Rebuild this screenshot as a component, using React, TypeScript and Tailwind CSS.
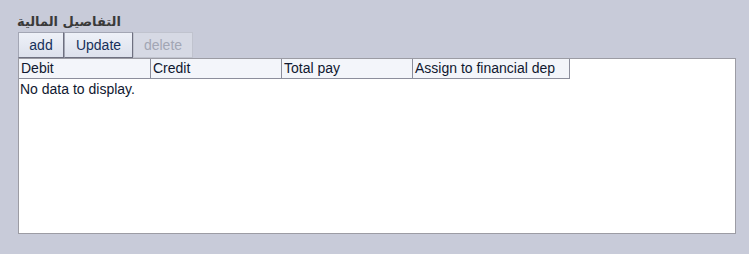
export default function App() {
  const columns = [
    { label: "Debit", w: "w-[132px]" },
    { label: "Credit", w: "w-[131px]" },
    { label: "Total pay", w: "w-[131px]" },
    { label: "Assign to financial dep", w: "w-[157px]" },
  ];

  return (
    <div className="w-[749px] h-[254px] bg-[#c8cbd9] pl-[18px] pt-[12px] font-['Liberation_Sans',sans-serif]">
      {/* Section title */}
      <div dir="rtl" className="w-fit h-[20px] text-[13px] font-bold leading-[20px] text-[#3a3a3a] font-['DejaVu_Sans',sans-serif] -ml-[1px]">
        التفاصيل المالية
      </div>

      {/* Toolbar */}
      <div className="flex h-[26px] text-[14px]">
        <button className="w-[46px] border border-[#a3a6b4] border-b-[#6e7080] border-r-[#6e7080] bg-gradient-to-b from-[#eef1f8] to-[#dde1ec] text-[#16305a]">
          add
        </button>
        <button className="w-[69px] border border-[#a3a6b4] border-b-[#6e7080] border-r-[#6e7080] bg-gradient-to-b from-[#eef1f8] to-[#dde1ec] text-[#16305a]">
          Update
        </button>
        <button className="w-[60px] border border-[#c0c3ce] bg-[#d6d9e4] text-[#a2a6b4]">
          delete
        </button>
      </div>

      {/* Grid */}
      <div className="w-[718px] h-[176px] bg-white border border-[#9c9ca4]">
        <div className="flex h-[20px]">
          {columns.map((c) => (
            <div
              key={c.label}
              className={`${c.w} h-[20px] border-r border-b border-[#8c8e9c] bg-[#f3f5fa] text-[14px] leading-[19px] text-[#101830] pl-[2px]`}
            >
              {c.label}
            </div>
          ))}
        </div>
        <div className="text-[14px] leading-[20px] text-[#101830] pl-[1px]">No data to display.</div>
      </div>
    </div>
  );
}
